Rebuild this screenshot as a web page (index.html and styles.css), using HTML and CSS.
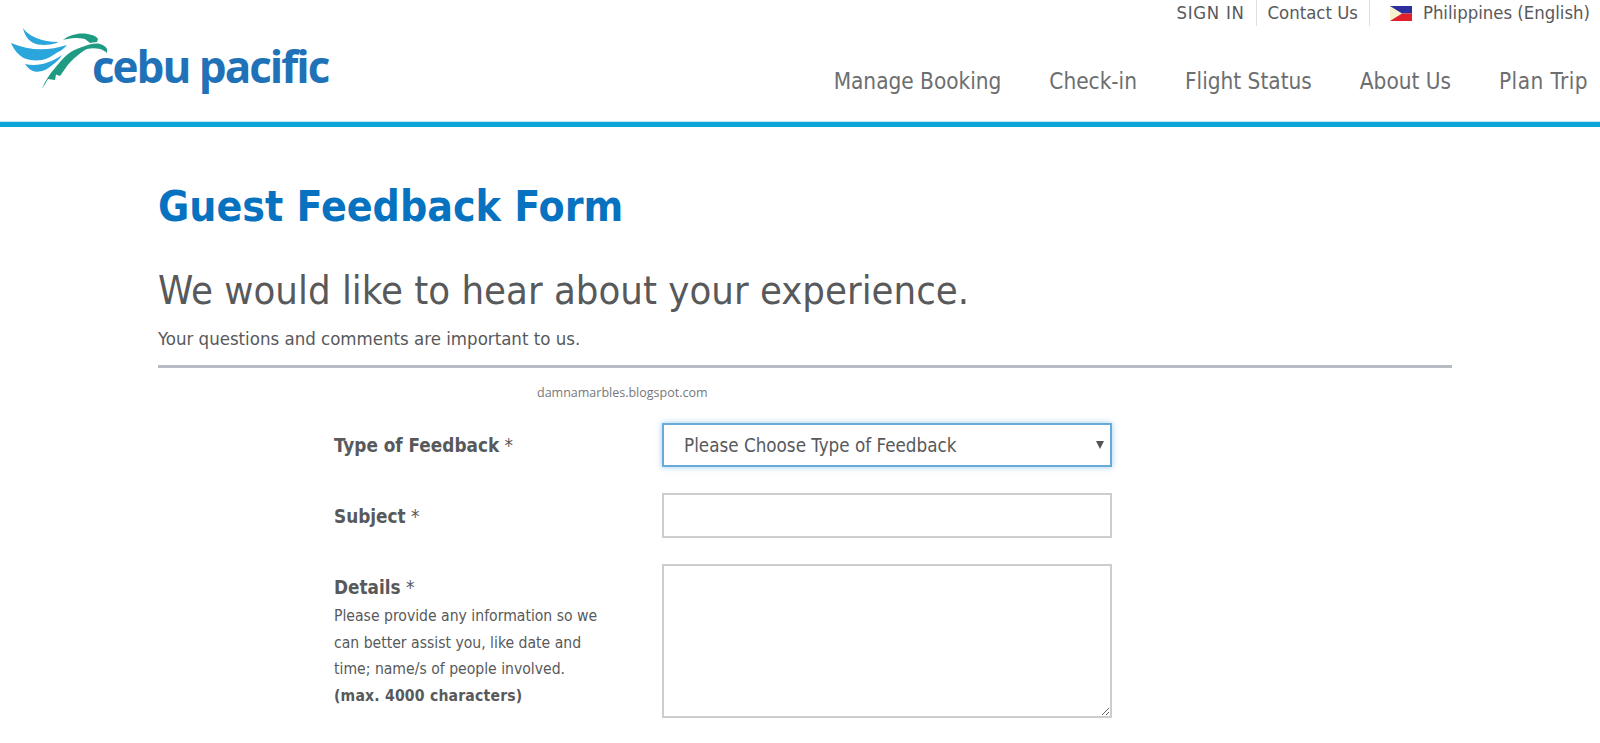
FILE: index.html
```html
<!DOCTYPE html>
<html lang="en">
<head>
  <meta charset="UTF-8">
  <title>Guest Feedback Form</title>
  <link rel="stylesheet" href="styles.css">
</head>
<body>
  <header class="site-header">
    <a class="logo" href="#">
      <svg class="logo-bird" width="112" height="92" viewBox="0 0 112 92">
        <path fill="#2ba6dc" d="M23 27C28 35 42 41 58 41L57 42C50 44 44 44.500 38 43.500C31 42 25 37 23 27Z"/>
        <path fill="#2ba6dc" d="M11 42C30 50 48 50 67 44C64 47 62 49.500 58 51C52 55 47 58 42 59C36 60 30 59.500 25 57.500C19 55 14 49 11 42Z"/>
        <path fill="#2ba6dc" d="M25 63C38 66 50 62 62 54C60 57 58 59.500 55 62C50 66 46 69 42 70C38 71 35 71 33 70C30 69 27 66 25 63Z"/>
        <path fill="#1f9b83" d="M63 39C68 35 72 34 77 33C83 32 88 33 92 34C95 35 97 36 98 38L97 41C94 41 92 42 90 42L85 38C81 37 78 37 75 37C71 37 67 38 63 39Z"/>
        <path fill="#1f9b83" d="M42 88C45 80 49 74 55 67C59 62 63 57 68 53C73 49 79 47 85 45C90 43 95 42 100 43C104 44 106 46 107 48V52C105 50 103 49 100 48C96 47 91 47 87 48C83 50 80 52 77 55C73 58 70 61 67 65L60 75L56 73.500L55 79L48 78Z"/>
      </svg>
      <span class="logo-text">cebu pacific</span>
    </a>
    <div class="header-right">
      <div class="top-links">
        <a class="sign-in" href="#">SIGN IN</a>
        <a href="#">Contact Us</a>
        <a class="locale" href="#">
          <svg class="flag" width="22" height="15" viewBox="0 0 22 15">
            <rect width="22" height="7.5" fill="#2d2f9c"/>
            <rect y="7.5" width="22" height="7.5" fill="#e0202c"/>
            <path fill="#f6f0cf" d="M0 0L12 7.5L0 15Z"/>
          </svg>
          Philippines (English)
        </a>
      </div>
      <nav class="main-nav">
        <a href="#">Manage Booking</a>
        <a href="#">Check-in</a>
        <a href="#">Flight Status</a>
        <a href="#">About Us</a>
        <a class="plan-trip" href="#">Plan Trip</a>
      </nav>
    </div>
  </header>

  <main class="content">
    <h1>Guest Feedback Form</h1>
    <h2>We would like to hear about your experience.</h2>
    <p class="intro">Your questions and comments are important to us.</p>
    <hr class="rule">
    <div class="watermark">damnamarbles.blogspot.com</div>

    <form class="feedback-form">
      <div class="form-row">
        <label class="field-label" for="type"><b>Type of Feedback</b> *</label>
        <div class="select-wrap">
          <select id="type" class="field field-focus">
            <option>Please Choose Type of Feedback</option>
          </select>
        </div>
      </div>
      <div class="form-row">
        <label class="field-label" for="subject"><b>Subject</b> *</label>
        <input id="subject" class="field" type="text">
      </div>
      <div class="form-row">
        <label class="field-label" for="details">
          <b>Details</b> *
          <small class="hint">Please provide any information so we can better assist you, like date and time; name/s of people involved.<br><b class="hint-max">(max. 4000 characters)</b></small>
        </label>
        <textarea id="details" class="field field-area"></textarea>
      </div>
    </form>
  </main>
</body>
</html>
```

FILE: styles.css
```css
* {
  box-sizing: border-box;
}
html, body {
  height: 100%;
  overflow: hidden;
}
body {
  margin: 0;
  background-color: #fff;
  color: #58595b;
  font-family: "DejaVu Sans", Verdana, sans-serif;
  font-stretch: condensed;
}
a {
  color: inherit;
  text-decoration: none;
}

/* header */
.site-header {
  display: flex;
  justify-content: space-between;
  height: 127px;
  border-bottom: 5px solid #0ba5d9;
  box-shadow: 0 -1px 0 #c5e6f3 inset;
}
.logo {
  display: flex;
  align-items: flex-start;
  padding-top: 1px;
}
.logo-bird {
  flex: none;
}
.logo-text {
  margin: 35px 0 0 -20px;
  color: #1f72b8;
  font-family: "Open Sans", sans-serif;
  font-stretch: normal;
  font-size: 44px;
  font-weight: 700;
  line-height: 60px;
  letter-spacing: -2px;
}
.header-right {
  display: flex;
  flex-direction: column;
  align-items: flex-end;
  padding-right: 12px;
}
.top-links {
  display: flex;
  height: 26px;
  margin-right: -2px;
  font-size: 18.4px;
  line-height: 26px;
}
.top-links a {
  padding: 0 11px;
  border-right: 1px solid #e0e0e0;
}
.top-links .sign-in {
  letter-spacing: 0.7px;
}
.top-links .locale {
  display: flex;
  align-items: center;
  gap: 11px;
  padding: 0 0 0 20px;
  border-right: 0;
}
.main-nav {
  display: flex;
  gap: 48px;
  margin-top: 41px;
  color: #6d6e70;
  font-size: 22.4px;
  line-height: 28px;
}
.main-nav .plan-trip {
  letter-spacing: 0.45px;
}

/* page content */
.content {
  width: 1294px;
  margin-left: 158px;
}
h1 {
  margin: 54px 0 0;
  color: #0672c0;
  font-size: 42.4px;
  line-height: 52px;
  font-weight: 700;
}
h2 {
  margin: 31px 0 0;
  font-size: 39.7px;
  line-height: 52px;
  font-weight: 400;
}
.intro {
  margin: 11px 0 0;
  font-size: 18.5px;
  line-height: 24px;
}
.rule {
  height: 3px;
  margin: 14px 0 0;
  border: 0;
  background-color: #b9bbc4;
}
.watermark {
  margin: 16px 0 0 379px;
  color: #77787a;
  font-family: "Open Sans", sans-serif;
  font-stretch: normal;
  font-size: 12.5px;
  line-height: 18px;
}

/* form */
.feedback-form {
  display: flex;
  flex-direction: column;
  gap: 26px;
  margin: 21px 0 0 176px;
}
.form-row {
  display: flex;
  align-items: flex-start;
}
.field-label {
  width: 328px;
  flex: none;
  padding: 10px 0 0;
  font-size: 18.8px;
  line-height: 26px;
}
.form-row + .form-row .field-label {
  padding-top: 11px;
}
.hint {
  display: block;
  width: 280px;
  margin-top: 2px;
  font-size: 15.6px;
  line-height: 26.7px;
}
.hint-max {
  letter-spacing: 0.2px;
}
.select-wrap {
  position: relative;
}
.select-wrap::after {
  content: "";
  position: absolute;
  top: 18px;
  right: 8px;
  border-top: 8px solid #555;
  border-left: 4.5px solid transparent;
  border-right: 4.5px solid transparent;
}
.field {
  display: block;
  width: 450px;
  height: 45px;
  padding: 0 20px;
  border: 2px solid #cdcdcd;
  border-radius: 0;
  background-color: #fff;
  color: #58595b;
  font-family: inherit;
  font-stretch: condensed;
  font-size: 18.7px;
  outline: none;
  appearance: none;
}
.field-focus {
  height: 44px;
  border-color: #6aaad8;
  box-shadow: 0 0 6px rgba(90, 170, 225, 0.6);
}
.field-area {
  height: 154px;
  resize: both;
}
```
